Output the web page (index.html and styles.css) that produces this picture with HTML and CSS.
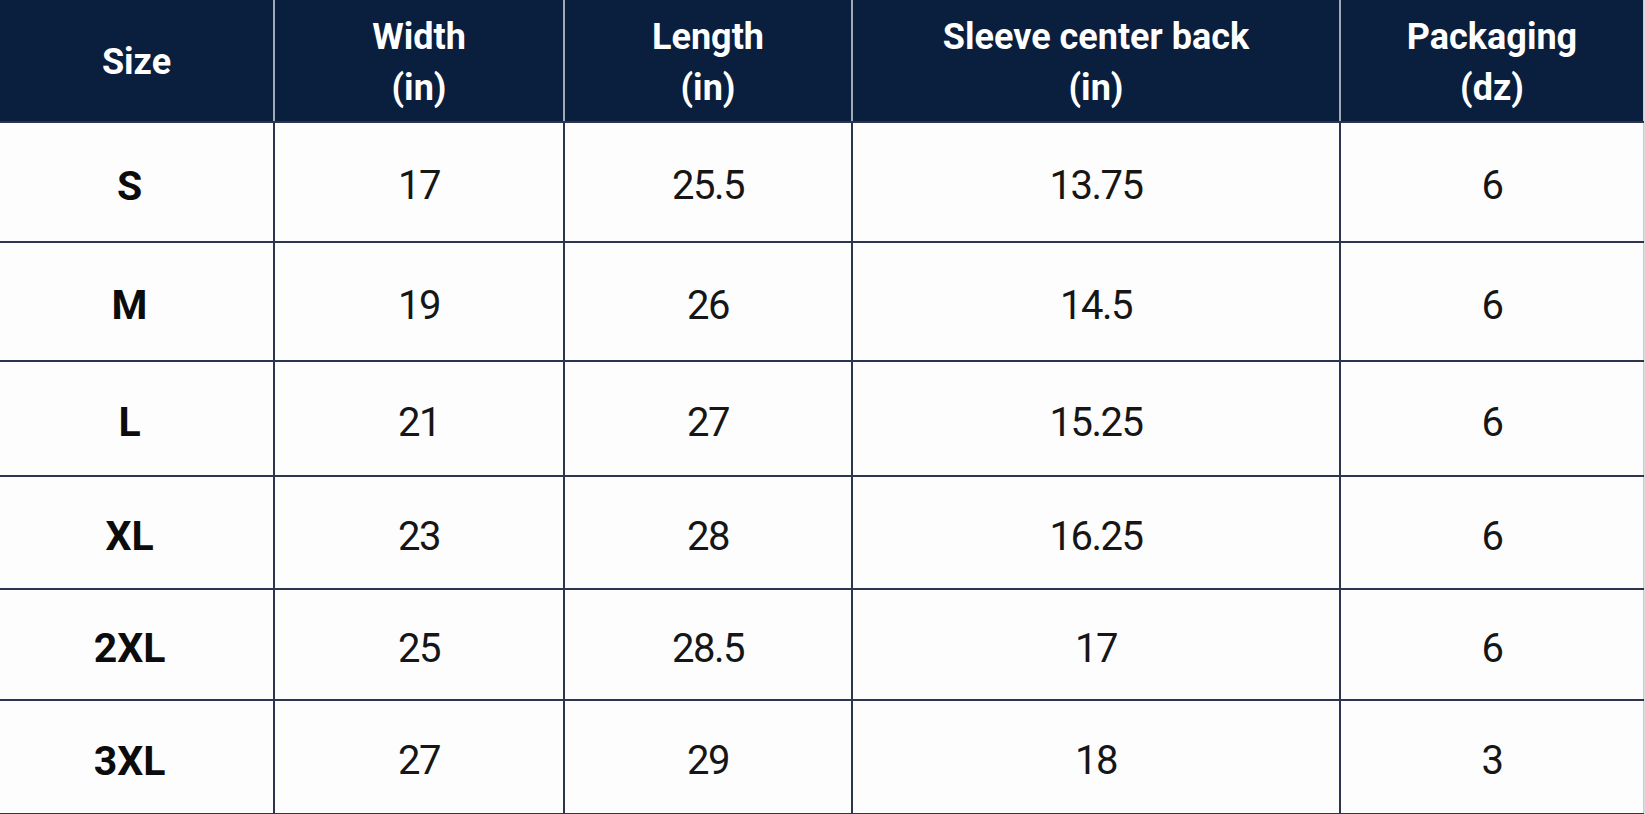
FILE: index.html
```html
<!DOCTYPE html>
<html>
<head>
<meta charset="utf-8">
<link rel="stylesheet" href="styles.css">
</head>
<body>
<table class="size-table">
  <colgroup>
    <col class="c-size"><col class="c-width"><col class="c-length"><col class="c-sleeve"><col class="c-pack">
  </colgroup>
  <thead>
    <tr>
      <th>Size</th>
      <th>Width<br>(in)</th>
      <th>Length<br>(in)</th>
      <th>Sleeve center back<br>(in)</th>
      <th>Packaging<br>(dz)</th>
    </tr>
  </thead>
  <tbody>
    <tr><td class="sz">S</td><td>17</td><td>25.5</td><td>13.75</td><td>6</td></tr>
    <tr><td class="sz">M</td><td>19</td><td>26</td><td>14.5</td><td>6</td></tr>
    <tr><td class="sz">L</td><td>21</td><td>27</td><td>15.25</td><td>6</td></tr>
    <tr><td class="sz">XL</td><td>23</td><td>28</td><td>16.25</td><td>6</td></tr>
    <tr><td class="sz">2XL</td><td>25</td><td>28.5</td><td>17</td><td>6</td></tr>
    <tr><td class="sz">3XL</td><td>27</td><td>29</td><td>18</td><td>3</td></tr>
  </tbody>
</table>
</body>
</html>
```
FILE: styles.css
```css
html, body {
  margin: 0;
  padding: 0;
  background: #d9dbe0;
}
body {
  width: 1645px;
  height: 814px;
  overflow: hidden;
}
.size-table {
  width: 1644px;
  border-collapse: collapse;
  table-layout: fixed;
  background: #fdfdfd;
  font-family: Roboto, "Liberation Sans", sans-serif;
  color: #111;
  border-right: 1px solid #c8ccd4;
}
.c-size { width: 274px; }
.c-width { width: 290px; }
.c-length { width: 288px; }
.c-sleeve { width: 488px; }
.c-pack { width: auto; }

.size-table th {
  background: #0a1e3d;
  color: #ffffff;
  font-weight: 700;
  font-size: 36px;
  line-height: 51px;
  height: 117px;
  padding: 4px 0 0;
  text-align: center;
  vertical-align: middle;
  border-left: 2px solid #a3a8b6;
  border-bottom: 2px solid #2b3550;
}
.size-table th:first-child { border-left: none; }

.size-table td {
  font-size: 40px;
  font-weight: 400;
  letter-spacing: -1.5px;
  text-align: center;
  vertical-align: middle;
  padding: 7px 0 0;
  border: 2px solid #2b3550;
  color: #161616;
}
.size-table td:first-child { border-left: none; }
.size-table td:last-child { border-right: none; }
.size-table td.sz {
  font-size: 41px;
  font-weight: 700;
  letter-spacing: 0;
  padding-right: 14px;
  color: #0c0c0c;
}
.size-table tbody tr:nth-child(1) td { height: 111px; }
.size-table tbody tr:nth-child(2) td { height: 110px; }
.size-table tbody tr:nth-child(3) td { height: 106px; }
.size-table tbody tr:nth-child(4) td { height: 104px; }
.size-table tbody tr:nth-child(5) td { height: 102px; }
.size-table tbody tr:nth-child(6) td { height: 105px; }
```
